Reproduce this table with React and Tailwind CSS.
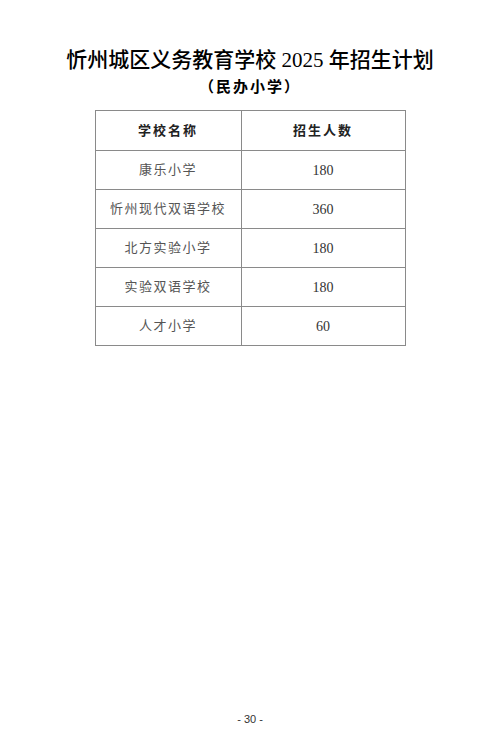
const rows = [
  ["康乐小学", "180"],
  ["忻州现代双语学校", "360"],
  ["北方实验小学", "180"],
  ["实验双语学校", "180"],
  ["人才小学", "60"],
];

const cjk = { fontFamily: '"Liberation Serif", "Noto Sans CJK SC", serif' };

export default function App() {
  return (
    <div className="w-[500px] h-[750px] bg-white flex flex-col items-center text-[#222]" style={cjk}>
      <h1 className="mt-[47px] text-[21px] leading-[26px] font-medium text-black">
        忻州城区义务教育学校 2025 年招生计划
      </h1>
      <h2 className="mt-[3px] text-[15px] leading-[22px] font-bold tracking-[2px] text-black">
        （民办小学）
      </h2>

      <table className="mt-[12px] w-[311px] border-collapse border border-[#8a8a8a] text-[13px]">
        <thead>
          <tr className="h-[40px]">
            <th className="w-[146px] border border-[#8a8a8a] font-bold tracking-[2px] text-[#222]">学校名称</th>
            <th className="border border-[#8a8a8a] font-bold tracking-[2px] text-[#222]">招生人数</th>
          </tr>
        </thead>
        <tbody>
          {rows.map(([name, num]) => (
            <tr key={name} className="h-[39px]">
              <td className="border border-[#8a8a8a] text-center tracking-[1.5px] text-[#555]">{name}</td>
              <td className="border border-[#8a8a8a] text-center text-[14px] text-[#333]">{num}</td>
            </tr>
          ))}
        </tbody>
      </table>

      <div className="flex-1" />
      <div className="mb-[23px] text-[11px] text-[#333]" style={{ fontFamily: '"Liberation Sans", sans-serif' }}>
        - 30 -
      </div>
    </div>
  );
}
